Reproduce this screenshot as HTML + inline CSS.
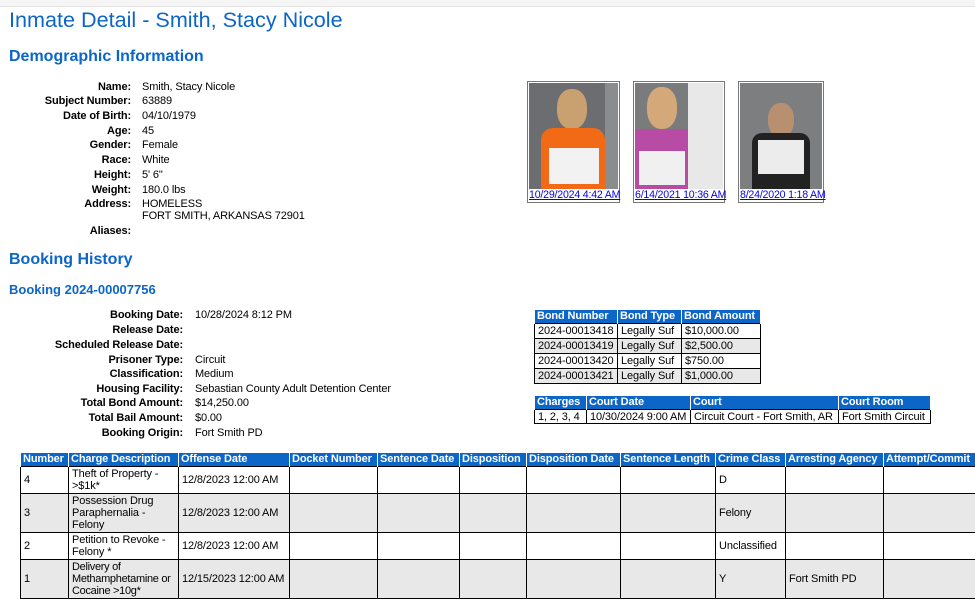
<!DOCTYPE html>
<html><head><meta charset="utf-8">
<style>
*{margin:0;padding:0;box-sizing:border-box}
body{width:975px;height:595px;overflow:hidden;background:#fff;font-family:"Liberation Sans",Arial,sans-serif;font-size:11px;color:#000;position:relative;letter-spacing:-0.12px}
.topbar{position:absolute;left:0;top:0;width:975px;height:7px;background:#f5f5f5;border-bottom:1px solid #e4e4e4}
h1{position:absolute;left:9px;top:7px;font-size:21.6px;font-weight:normal;color:#0b66c8;letter-spacing:0}
.h2{position:absolute;left:9px;font-size:16px;font-weight:bold;color:#0b66c8;letter-spacing:0}
.h3{position:absolute;left:9px;font-size:13px;font-weight:bold;color:#0b66c8;letter-spacing:0}
.lbl{position:absolute;text-align:right;font-weight:bold;white-space:nowrap}
.val{position:absolute;white-space:nowrap}
.ph{position:absolute;border:1px solid #777;background:#fff;padding:1px}
.ph .img{position:relative;overflow:hidden}
.ph a{display:block;color:#00e;text-decoration:underline;font-size:10.6px;line-height:12px;text-align:center;white-space:nowrap;letter-spacing:-0.2px}
table{position:absolute;border-collapse:collapse;table-layout:fixed}
th{background:#0b66c8;color:#fff;font-weight:bold;text-align:left;padding:0 2px;border-left:1px solid #fff;border-right:1px solid #fff;height:13px;line-height:13px;white-space:nowrap;overflow:hidden}
td{border:1px solid #000;padding:0 3px;line-height:12px;vertical-align:middle;white-space:nowrap;overflow:hidden}
tr.g td{background:#e8e8e8}
.ct td{white-space:normal;padding:0 2px 0 3px}
.ct td.nw{white-space:nowrap}
</style></head><body>
<div class="topbar"></div>
<h1>Inmate Detail - Smith, Stacy Nicole</h1>
<div class="h2" style="top:48px">Demographic Information</div>

<div class="lbl" style="right:844px;top:81px">Name:</div><div class="val" style="left:142px;top:81px">Smith, Stacy Nicole</div>
<div class="lbl" style="right:844px;top:95px">Subject Number:</div><div class="val" style="left:142px;top:95px">63889</div>
<div class="lbl" style="right:844px;top:110px">Date of Birth:</div><div class="val" style="left:142px;top:110px">04/10/1979</div>
<div class="lbl" style="right:844px;top:125px">Age:</div><div class="val" style="left:142px;top:125px">45</div>
<div class="lbl" style="right:844px;top:139px">Gender:</div><div class="val" style="left:142px;top:139px">Female</div>
<div class="lbl" style="right:844px;top:154px">Race:</div><div class="val" style="left:142px;top:154px">White</div>
<div class="lbl" style="right:844px;top:169px">Height:</div><div class="val" style="left:142px;top:169px">5' 6"</div>
<div class="lbl" style="right:844px;top:184px">Weight:</div><div class="val" style="left:142px;top:184px">180.0 lbs</div>
<div class="lbl" style="right:844px;top:198px">Address:</div><div class="val" style="left:142px;top:198px;line-height:12px">HOMELESS<br>FORT SMITH, ARKANSAS 72901</div>
<div class="lbl" style="right:844px;top:225px">Aliases:</div>

<div class="ph" style="left:527px;top:81px;width:93px;height:122px">
 <div class="img" style="width:89px;height:106px;background:#6b6d70">
  <div style="position:absolute;left:76px;top:0;width:13px;height:106px;background:#8a8c8e"></div>
  <div style="position:absolute;left:28px;top:6px;width:30px;height:40px;border-radius:45%;background:#c9a070"></div>
  <div style="position:absolute;left:12px;top:45px;width:64px;height:62px;background:#f26a16;border-radius:12px 12px 0 0"></div>
  <div style="position:absolute;left:20px;top:65px;width:50px;height:36px;background:#f2f2f2"></div>
 </div>
 <a>10/29/2024 4:42 AM</a>
</div>
<div class="ph" style="left:633px;top:81px;width:92px;height:122px">
 <div class="img" style="width:88px;height:106px;background:#e8e8e8">
  <div style="position:absolute;left:0;top:0;width:53px;height:106px;background:#7a7b7d"></div>
  <div style="position:absolute;left:12px;top:4px;width:30px;height:42px;border-radius:45%;background:#d4a878"></div>
  <div style="position:absolute;left:0;top:46px;width:53px;height:61px;background:#b84ca4"></div>
  <div style="position:absolute;left:4px;top:68px;width:46px;height:34px;background:#f0f0f0"></div>
 </div>
 <a>6/14/2021 10:36 AM</a>
</div>
<div class="ph" style="left:738px;top:81px;width:86px;height:122px">
 <div class="img" style="width:82px;height:106px;background:#7d7e80">
  <div style="position:absolute;left:28px;top:20px;width:26px;height:34px;border-radius:45%;background:#b89070"></div>
  <div style="position:absolute;left:12px;top:50px;width:58px;height:57px;background:#222;border-radius:10px 10px 0 0"></div>
  <div style="position:absolute;left:18px;top:57px;width:46px;height:34px;background:#ececec"></div>
 </div>
 <a>8/24/2020 1:18 AM</a>
</div>

<div class="h2" style="top:251px">Booking History</div>
<div class="h3" style="top:282px">Booking 2024-00007756</div>

<div class="lbl" style="right:792px;top:309px">Booking Date:</div><div class="val" style="left:195px;top:309px">10/28/2024 8:12 PM</div>
<div class="lbl" style="right:792px;top:324px">Release Date:</div>
<div class="lbl" style="right:792px;top:339px">Scheduled Release Date:</div>
<div class="lbl" style="right:792px;top:354px">Prisoner Type:</div><div class="val" style="left:195px;top:354px">Circuit</div>
<div class="lbl" style="right:792px;top:368px">Classification:</div><div class="val" style="left:195px;top:368px">Medium</div>
<div class="lbl" style="right:792px;top:383px">Housing Facility:</div><div class="val" style="left:195px;top:383px">Sebastian County Adult Detention Center</div>
<div class="lbl" style="right:792px;top:397px">Total Bond Amount:</div><div class="val" style="left:195px;top:397px">$14,250.00</div>
<div class="lbl" style="right:792px;top:412px">Total Bail Amount:</div><div class="val" style="left:195px;top:412px">$0.00</div>
<div class="lbl" style="right:792px;top:427px">Booking Origin:</div><div class="val" style="left:195px;top:427px">Fort Smith PD</div>

<table style="left:534px;top:310px;width:226px">
<colgroup><col style="width:83px"><col style="width:64px"><col style="width:79px"></colgroup>
<tr><th>Bond Number</th><th>Bond Type</th><th>Bond Amount</th></tr>
<tr><td style="height:15px">2024-00013418</td><td>Legally Suf</td><td>$10,000.00</td></tr>
<tr class="g"><td style="height:15px">2024-00013419</td><td>Legally Suf</td><td>$2,500.00</td></tr>
<tr><td style="height:15px">2024-00013420</td><td>Legally Suf</td><td>$750.00</td></tr>
<tr class="g"><td style="height:15px">2024-00013421</td><td>Legally Suf</td><td>$1,000.00</td></tr>
</table>

<table style="left:534px;top:396px;width:396px">
<colgroup><col style="width:52px"><col style="width:104px"><col style="width:148px"><col style="width:92px"></colgroup>
<tr><th>Charges</th><th>Court Date</th><th>Court</th><th>Court Room</th></tr>
<tr><td style="height:14px">1, 2, 3, 4</td><td>10/30/2024 9:00 AM</td><td>Circuit Court - Fort Smith, AR</td><td>Fort Smith Circuit</td></tr>
</table>

<table class="ct" style="left:20px;top:453px;width:968px">
<colgroup><col style="width:48px"><col style="width:110px"><col style="width:111px"><col style="width:88px"><col style="width:82px"><col style="width:67px"><col style="width:94px"><col style="width:95px"><col style="width:70px"><col style="width:98px"><col style="width:105px"></colgroup>
<tr><th>Number</th><th>Charge Description</th><th>Offense Date</th><th>Docket Number</th><th>Sentence Date</th><th>Disposition</th><th>Disposition Date</th><th>Sentence Length</th><th>Crime Class</th><th>Arresting Agency</th><th>Attempt/Commit</th></tr>
<tr><td style="height:27px">4</td><td>Theft of Property - &gt;$1k*</td><td class="nw">12/8/2023 12:00 AM</td><td></td><td></td><td></td><td></td><td></td><td>D</td><td></td><td></td></tr>
<tr class="g"><td style="height:39px">3</td><td>Possession Drug Paraphernalia - Felony</td><td class="nw">12/8/2023 12:00 AM</td><td></td><td></td><td></td><td></td><td></td><td>Felony</td><td></td><td></td></tr>
<tr><td style="height:27px">2</td><td>Petition to Revoke - Felony *</td><td class="nw">12/8/2023 12:00 AM</td><td></td><td></td><td></td><td></td><td></td><td>Unclassified</td><td></td><td></td></tr>
<tr class="g"><td style="height:39px">1</td><td style="letter-spacing:-0.3px">Delivery of<br>Methamphetamine or<br>Cocaine &gt;10g*</td><td class="nw">12/15/2023 12:00 AM</td><td></td><td></td><td></td><td></td><td></td><td>Y</td><td>Fort Smith PD</td><td></td></tr>
</table>
</body></html>
